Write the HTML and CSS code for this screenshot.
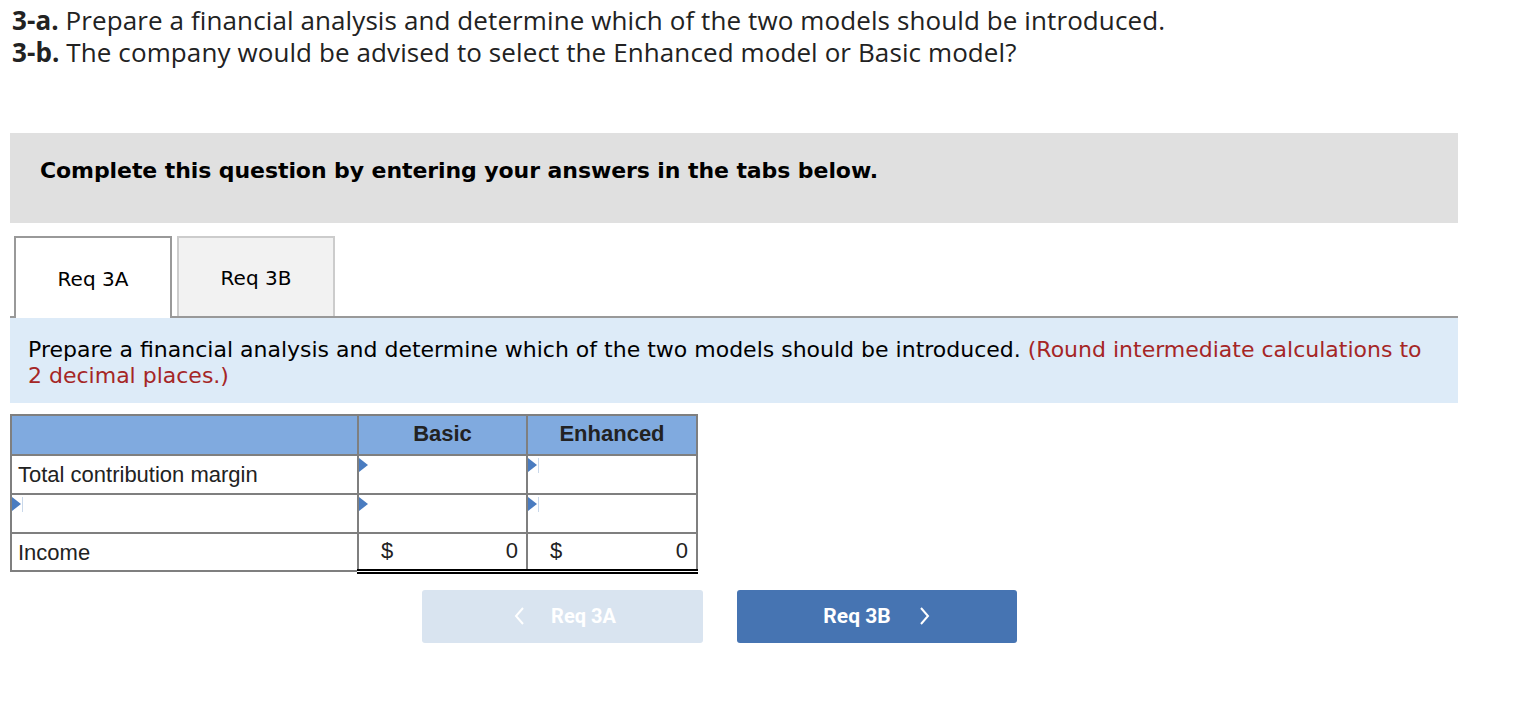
FILE: index.html
```html
<!DOCTYPE html>
<html>
<head>
<meta charset="utf-8">
<link rel="stylesheet" href="styles.css">
</head>
<body>
<div class="page">
  <div class="intro">
    <p><b>3-a.</b> Prepare a financial analysis and determine which of the two models should be introduced.</p>
    <p><b>3-b.</b> The company would be advised to select the Enhanced model or Basic model?</p>
  </div>

  <div class="notice">Complete this question by entering your answers in the tabs below.</div>

  <div class="tabs">
    <div class="tab active">Req 3A</div>
    <div class="tab">Req 3B</div>
  </div>

  <div class="info">Prepare a financial analysis and determine which of the two models should be introduced. <span class="hint">(Round intermediate calculations to 2 decimal places.)</span></div>

  <table class="grid">
    <colgroup>
      <col class="c-label">
      <col class="c-num">
      <col class="c-num2">
    </colgroup>
    <tr class="head">
      <th></th>
      <th>Basic</th>
      <th>Enhanced</th>
    </tr>
    <tr>
      <td class="label">Total contribution margin</td>
      <td class="input"><span class="tri"></span></td>
      <td class="input"><span class="tri"></span><span class="caret"></span></td>
    </tr>
    <tr>
      <td class="label input"><span class="tri"></span><span class="caret"></span></td>
      <td class="input"><span class="tri"></span></td>
      <td class="input"><span class="tri"></span><span class="caret"></span></td>
    </tr>
    <tr class="total">
      <td class="label">Income</td>
      <td class="money"><span class="cur">$</span><span class="val">0</span></td>
      <td class="money"><span class="cur">$</span><span class="val">0</span></td>
    </tr>
  </table>

  <div class="nav">
    <button class="btn prev" type="button">
      <svg width="12" height="20" viewBox="0 0 12 20"><path d="M10 2 L3 10 L10 18" fill="none" stroke="#fff" stroke-width="2"/></svg>
      <span>Req 3A</span>
    </button>
    <button class="btn next" type="button">
      <span>Req 3B</span>
      <svg width="12" height="20" viewBox="0 0 12 20"><path d="M2 2 L9 10 L2 18" fill="none" stroke="#fff" stroke-width="2"/></svg>
    </button>
  </div>
</div>
</body>
</html>
```

FILE: styles.css
```css
* { box-sizing: border-box; }

html, body {
  margin: 0;
  padding: 0;
  background: #fff;
}

.page {
  width: 1458px;
  padding-left: 10px;
}

.intro {
  font-family: "Open Sans", "Liberation Sans", sans-serif;
  font-size: 26px;
  line-height: 32px;
  letter-spacing: 0.1px;
  color: #222;
  padding: 4px 0 0 2px;
  height: 133px;
}

.intro p { margin: 0; }
.intro b { font-weight: 700; }

.notice {
  height: 90px;
  background: #e0e0e0;
  padding: 25px 0 0 30px;
  font-family: "DejaVu Sans", Verdana, sans-serif;
  font-weight: bold;
  font-size: 22px;
  line-height: 26px;
  letter-spacing: -0.08px;
  color: #000;
}

.tabs {
  margin-top: 13px;
  display: flex;
  gap: 5px;
  padding-left: 4px;
  border-bottom: 2px solid #999;
  height: 82px;
}

.tab {
  width: 158px;
  height: 80px;
  border: 2px solid #ccc;
  border-bottom: none;
  background: #f2f2f2;
  display: flex;
  align-items: center;
  justify-content: center;
  font-family: "DejaVu Sans", Verdana, sans-serif;
  font-size: 20px;
  color: #000;
  padding-top: 2px;
}

.tab.active {
  height: 82px;
  border-color: #999;
  background: #fff;
  margin-bottom: -2px;
}

.info {
  background: #ddebf8;
  height: 85px;
  padding: 19px 28px 0 18px;
  font-family: "DejaVu Sans", Verdana, sans-serif;
  font-size: 22px;
  line-height: 26px;
  color: #000;
}

.hint { color: #a52626; }

.grid {
  margin-top: 11px;
  border-collapse: collapse;
  width: 686px;
  font-family: "Liberation Sans", Arial, sans-serif;
  font-size: 22px;
  color: #222;
  table-layout: fixed;
}

.c-label { width: 347px; }
.c-num { width: 169px; }
.c-num2 { width: 170px; }

.grid th, .grid td {
  border: 2px solid #7f7f7f;
  height: 39px;
  padding: 0 6px;
  position: relative;
}

.grid tr.head th {
  background: #80aadf;
  font-weight: bold;
  height: 40px;
  text-align: center;
  color: #222;
  padding-bottom: 2px;
}

.grid td.label { padding-top: 1px; }

.tri {
  position: absolute;
  left: 0;
  top: 2px;
  width: 0;
  height: 0;
  border-top: 7px solid transparent;
  border-bottom: 7px solid transparent;
  border-left: 9px solid #4a7cc0;
}

.caret {
  position: absolute;
  left: 10px;
  top: 2px;
  width: 1px;
  height: 15px;
  background: #c9d8ea;
}

.grid tr.total td { height: 38px; }

.grid tr.total td.money {
  border-top: 2px solid #000;
  border-bottom: 5px double #000;
  padding: 0 8px 0 22px;
}

.money {
  white-space: nowrap;
}

.money .cur { float: left; }
.money .val { float: right; }

.nav {
  margin-top: 16px;
  padding-left: 412px;
  display: flex;
  gap: 34px;
}

.btn {
  width: 281px;
  height: 53px;
  border: none;
  border-radius: 3px;
  display: flex;
  align-items: center;
  justify-content: center;
  gap: 26px;
  font-family: Roboto, "Liberation Sans", sans-serif;
  font-weight: bold;
  font-size: 20px;
  color: #fff;
  padding: 0;
}

.btn.prev { background: #d9e4f0; padding-left: 4px; }
.btn.next { background: #4674b2; width: 280px; gap: 28px; font-size: 21px; padding-left: 0; }
.btn svg { display: block; }
```
